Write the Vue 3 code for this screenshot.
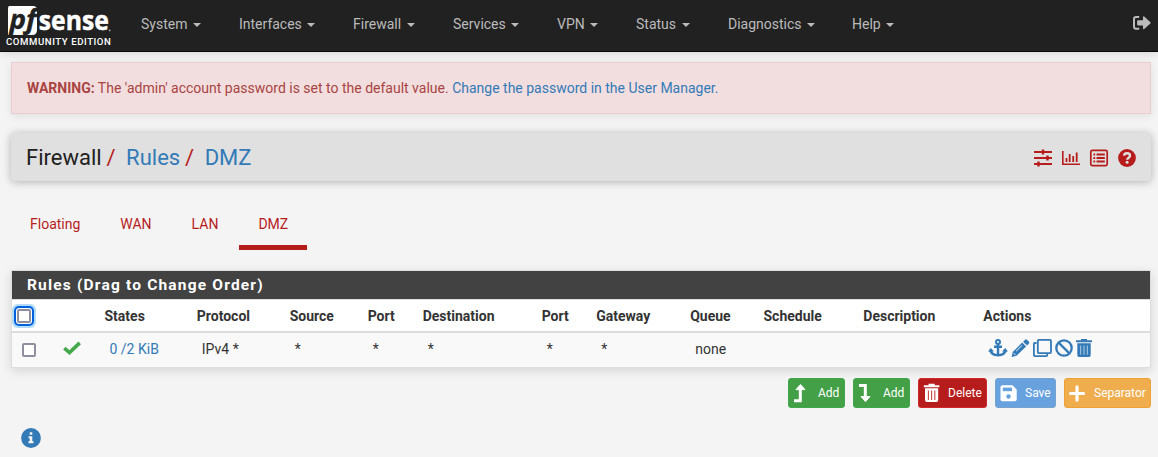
<script setup>
const menus = [
  { label: 'System', cls: 'm1' },
  { label: 'Interfaces', cls: 'm2' },
  { label: 'Firewall', cls: 'm3' },
  { label: 'Services', cls: 'm4' },
  { label: 'VPN', cls: 'm5' },
  { label: 'Status', cls: 'm6' },
  { label: 'Diagnostics', cls: 'm7' },
  { label: 'Help', cls: 'm8' },
]
const tabs = ['Floating', 'WAN', 'LAN', 'DMZ']
const columns = ['States', 'Protocol', 'Source', 'Port', 'Destination', 'Port', 'Gateway', 'Queue', 'Schedule', 'Description']
const values = ['IPv4 *', '*', '*', '*', '*', '*', 'none', '', '']
</script>

<template>
  <div class="page">
    <nav class="navbar">
      <div class="brand">
        <svg class="logo" width="106" height="31" viewBox="0 0 106 31">
          <path d="M3 1H27Q31 1 31 5V25Q31 30 26 30H2V4Q2 1 3 1Z" fill="#fff" />
          <text class="pf" x="3.4" y="24.4" textLength="27" lengthAdjust="spacingAndGlyphs">pf</text>
          <text class="sense" x="32.8" y="24.6" textLength="70" lengthAdjust="spacingAndGlyphs">sense</text>
          <circle cx="103.6" cy="25.4" r="0.9" fill="#aaa" />
        </svg>
        <span class="edition">COMMUNITY EDITION</span>
      </div>
      <ul class="menu">
        <li v-for="m in menus" :key="m.label" :class="m.cls">{{ m.label }}<i class="caret"></i></li>
      </ul>
      <svg class="logout" width="20" height="16" viewBox="0 0 20 16">
        <path d="M7.2 1.9H4Q2 1.9 2 3.9V11.7Q2 13.7 4 13.7H7.2" fill="none" stroke="#bbb" stroke-width="2" />
        <path d="M6 5.2H11V1.8Q11.3 1 12.2 1.5L18.4 7.2Q18.8 7.8 18.4 8.4L12.2 14Q11.3 14.6 11 13.6V10.4H6Q5.1 10.3 5.1 9.5V6Q5.2 5.3 6 5.2Z" fill="#bbb" />
      </svg>
    </nav>

    <div class="container">
      <div class="alert"><b>WARNING:</b> The 'admin' account password is set to the default value. <a>Change the password in the User Manager.</a></div>

      <header class="header">
        <div class="crumbs">
          <span class="c1">Firewall</span><span class="sl">/</span><a>Rules</a><span class="sl">/</span><a>DMZ</a>
        </div>
        <div class="tools">
          <svg width="18" height="18" viewBox="0 0 18 18">
            <path d="M0 3H18M0 9H18M0 15H18" stroke="#b71c1c" stroke-width="2" />
            <path d="M9 .6V5.4M13.5 6.6V11.4M4.5 12.6V17.4" stroke="#b71c1c" stroke-width="2.4" />
          </svg>
          <svg width="18" height="18" viewBox="0 0 18 18">
            <path d="M.8 2V15.2H18" fill="none" stroke="#b71c1c" stroke-width="1.6" />
            <path d="M4.5 9V13M7.7 5V13M11.2 7V13M14.7 3.5V13" stroke="#b71c1c" stroke-width="1.8" />
          </svg>
          <svg width="18" height="18" viewBox="0 0 18 18">
            <rect x=".8" y="1.4" width="16.4" height="15.2" rx="1.5" fill="none" stroke="#b71c1c" stroke-width="1.7" />
            <path d="M3.4 5.5H5.2M3.4 9H5.2M3.4 12.5H5.2M6.5 5.5H14.8M6.5 9H14.8M6.5 12.5H14.8" stroke="#b71c1c" stroke-width="1.8" />
          </svg>
          <svg width="18" height="18" viewBox="0 0 18 18">
            <circle cx="9" cy="9" r="8.9" fill="#b71c1c" />
            <path d="M6 6.6C6.4 3.5 12 3.4 12 6.7C12 8.8 9.3 8.6 9.2 10.8" fill="none" stroke="#e0e0e0" stroke-width="2.4" />
            <circle cx="9.1" cy="13.3" r="1.5" fill="#e0e0e0" />
          </svg>
        </div>
      </header>

      <ul class="tabs">
        <li v-for="t in tabs" :key="t" :class="{ active: t === 'DMZ' }">{{ t }}</li>
      </ul>

      <section class="panel">
        <h2>Rules (Drag to Change Order)</h2>
        <div class="row head">
          <div class="pick"><span class="box focus"></span></div>
          <div></div>
          <div v-for="(c, i) in columns" :key="i">{{ c }}</div>
          <div>Actions</div>
        </div>
        <div class="row data">
          <div class="pick"><span class="box"></span></div>
          <div class="pass">
            <svg width="18" height="14" viewBox="0 0 18 14">
              <path d="M1.3 7.2L6.5 11.6L16.7 1.9" fill="none" stroke="#43a94a" stroke-width="3.6" />
            </svg>
          </div>
          <div><a>0 /2 KiB</a></div>
          <div v-for="(v, i) in values" :key="i">{{ v }}</div>
          <div class="actions">
            <svg width="20" height="18" viewBox="0 0 20 18">
              <circle cx="10" cy="3" r="2" fill="none" stroke="#337ab7" stroke-width="2" />
              <path d="M10 5V16M6 7.7H14" stroke="#337ab7" stroke-width="2.4" />
              <path d="M2.5 11.5Q3.5 16 10 16.3Q16.5 16 17.5 11.5" fill="none" stroke="#337ab7" stroke-width="2.6" />
              <path d="M0 12.5L2.8 9L6 12.5ZM14 12.5L17.2 9L20 12.5Z" fill="#337ab7" />
            </svg>
            <svg width="19" height="18" viewBox="0 0 19 18">
              <path d="M12.1 2.7L14.1.7Q15 0 15.9.7L18 2.8Q18.7 3.7 18 4.6L16 6.6Z" fill="#337ab7" />
              <path d="M11.2 3.6L15.1 7.5L5.5 16.8L.6 18L1.7 13Z" fill="#337ab7" />
              <path d="M5 12.2L11 6.4M2.6 14.1L4.5 16" stroke="#f9f9f9" stroke-width=".9" />
            </svg>
            <svg width="19" height="18" viewBox="0 0 19 18">
              <rect x="4.8" y=".9" width="13.2" height="13.2" rx="1" fill="none" stroke="#337ab7" stroke-width="1.8" />
              <path d="M3.5 4H1.9Q.9 4 .9 5V16.1Q.9 17.1 1.9 17.1H13.2Q14.2 17.1 14.2 16.1V14.8" fill="none" stroke="#337ab7" stroke-width="1.8" />
            </svg>
            <svg width="18" height="18" viewBox="0 0 18 18">
              <circle cx="9" cy="9" r="7.7" fill="none" stroke="#337ab7" stroke-width="2.3" />
              <path d="M3.6 3.6L14.4 14.4" stroke="#337ab7" stroke-width="2.3" />
            </svg>
            <svg width="16" height="18" viewBox="0 0 16 18">
              <path d="M0 2.3H16M5 1H11" stroke="#337ab7" stroke-width="1.9" />
              <path d="M1.3 4.3H14.7V16Q14.7 18 13 18H3Q1.3 18 1.3 16Z" fill="#337ab7" />
              <path d="M4.7 6.5V15.7M8 6.5V15.7M11.3 6.5V15.7" stroke="#b4cde4" stroke-width="1" />
            </svg>
          </div>
        </div>
      </section>

      <div class="buttons">
        <button class="green b1">
          <svg width="18" height="20" viewBox="0 0 18 20"><path d="M1 17.8H7.3V5.5" fill="none" stroke="#fff" stroke-width="3" /><path d="M3 6.6L7.5 1.5L12 6.6Z" fill="#fff" stroke="#fff" stroke-linejoin="round" /></svg>Add
        </button>
        <button class="green b1">
          <svg width="18" height="20" viewBox="0 0 18 20"><path d="M1 2.4H7.3V14.5" fill="none" stroke="#fff" stroke-width="3" /><path d="M3 13.6L7.5 18.7L12 13.6Z" fill="#fff" stroke="#fff" stroke-linejoin="round" /></svg>Add
        </button>
        <button class="red b2">
          <svg width="18" height="20" viewBox="0 0 18 20"><path d="M.8 3.3H16.4M5.5 1.7H11.7" stroke="#fff" stroke-width="2" /><path d="M2 5.3H15.2V17Q15.2 19 13.4 19H3.8Q2 19 2 17Z" fill="#fff" /><path d="M5.4 7.5V17M8.6 7.5V17M11.8 7.5V17" stroke="#c44848" stroke-width="1.1" /></svg>Delete
        </button>
        <button class="blue b3">
          <svg width="18" height="20" viewBox="0 0 18 20"><path d="M2.5 2.3H12.5L16.7 6.4V16.5Q16.7 18.3 14.9 18.3H2.3Q.5 18.3 .5 16.5V4.3Q.5 2.3 2.5 2.3Z" fill="#fff" /><path d="M2.8 4.6H12V8.2H2.8Z" fill="#67a1de" /><circle cx="8.5" cy="13.5" r="2.2" fill="#67a1de" /></svg>Save
        </button>
        <button class="orange b4">
          <svg width="18" height="20" viewBox="0 0 18 20"><path d="M8 3.9V17.1M1.5 10.5H14.5" stroke="#fff" stroke-width="3.2" stroke-linecap="round" /></svg>Separator
        </button>
      </div>

      <svg class="info" width="20" height="20" viewBox="0 0 20 20">
        <circle cx="10" cy="10" r="9.9" fill="#337ab7" />
        <path d="M8.7 4.2H11.3V6.8H8.7ZM7.5 8.2H11.3V13.2H12.5V15.2H7.5V13.2H8.7V10.2H7.5Z" fill="#f4f4f4" />
      </svg>
    </div>
  </div>
</template>

<style>
body { background: #f4f4f4; overflow: hidden; }
</style>

<style scoped>
* { box-sizing: border-box; }
.page { height: 457px; background: #f4f4f4; font: 14px/20px Roboto, sans-serif; color: #333; }
ul { list-style: none; margin: 0; padding: 0; }
a { color: #337ab7; }
svg { display: block; flex: none; overflow: visible; }
.navbar { display: flex; height: 52px; background: #212121; border-bottom: 1px solid #080808; box-shadow: 0 2px 9px rgba(0, 0, 0, .12); }
.brand { width: 135px; padding: 5px 0 0 6px; color: #fff; }
.logo { display: block; }
.pf { font: italic 700 26px "Open Sans", sans-serif; fill: #212121; stroke: #212121; stroke-width: .3px; }
.sense { font: 700 27px "Open Sans", sans-serif; fill: #fff; stroke: #fff; stroke-width: .5px; }
.edition { display: block; font-size: 9.6px; line-height: 11px; font-weight: 500; letter-spacing: .57px; white-space: nowrap; }
.menu { display: flex; flex: 1; padding: 14px 0 0 6px; color: #bbb; }
.m1 { width: 98px; }
.m2 { width: 114px; }
.m3 { width: 100px; }
.m4 { width: 104px; }
.m5 { width: 79px; }
.m6 { width: 92px; }
.m7 { width: 124px; }
.caret { display: inline-block; margin-left: 5.5px; vertical-align: middle; border: 4px solid transparent; border-top-color: #bbb; border-bottom: 0; }
.logout { margin: 15px 6px 0 0; }
.container { padding: 10px 7px 0 11px; }
.alert { height: 52px; padding: 15px; background: #f2dede; border: 1px solid #ebccd1; color: #a94442; box-shadow: 0 2px 8px rgba(0, 0, 0, .09); }
.header { display: flex; justify-content: space-between; align-items: center; height: 48px; margin-top: 19px; padding: 0 15px; border-radius: 4px; background: #e0e0e0; box-shadow: 0 1px 8px rgba(0, 0, 0, .28); }
.crumbs { display: flex; padding-top: 2px; font-size: 22px; line-height: 24px; color: #212121; }
.sl { margin: 0 10.6px 0 4.8px; color: #b71c1c; }
.tools { display: flex; gap: 10px; padding-top: 2px; }
.tabs { display: flex; gap: 2px; margin-top: 18px; height: 51px; color: #b71c1c; }
.tabs li { padding: 15px 19px 0; border-bottom: 5px solid transparent; }
.tabs .active { border-bottom-color: #b71c1c; }
.panel { margin-top: 20px; border: 1px solid #ddd; background: #fff; box-shadow: 0 3px 10px rgba(0, 0, 0, .12); }
h2 { margin: 0; height: 28px; padding-left: 15px; background: #424242; color: #fff; font: 700 15.5px/28px Roboto, sans-serif; letter-spacing: 1.18px; }
.row { display: grid; grid-template-columns: 48.5px 39px 92.3px 92.9px 78px 55px 119px 54.5px 94px 73.3px 99.8px 120px 1fr; }
.row > div { padding-left: 5px; white-space: nowrap; }
.head { height: 34px; border-top: 1px solid #ddd; border-bottom: 2px solid #ddd; font-weight: 700; line-height: 32px; }
.data { height: 34px; background: #f9f9f9; line-height: 32px; }
.data > div { padding-left: 10px; }
.box { display: block; width: 14px; height: 14px; border: 2px solid #8f8f9d; border-radius: 2px; background: #fff; }
.head .pick { padding: 9px 0 0 5px; }
.data .pick { padding: 10px 0 0 10px; }
.head .focus { box-shadow: 0 0 0 1px #fff, 0 0 0 3px #0060df, 0 0 0 5px #b3dcf8; border-radius: 2px; }
.data .pass { padding: 8px 0 0 2px; }
.data .actions { display: flex; gap: 3px; padding: 6px 0 0 9.5px; }
.buttons { display: flex; justify-content: flex-end; gap: 8px; margin-top: 10px; }
button { display: flex; align-items: center; gap: 7px; height: 30px; padding: 0 0 0 4px; border: 1px solid; border-radius: 3px; color: #fff; font: 12px/18px Roboto, sans-serif; }
.b1 { width: 57px; }
.b2 { width: 69px; }
.b3 { width: 61px; }
.b4 { width: 87px; }
.green { background: #43a047; border-color: #3fa84a; }
.red { background: #b71c1c; border-color: #cf2929; }
.blue { background: #67a1de; border-color: #75a3cd; }
.orange { background: #f0ad4e; border-color: #eea236; }
.info { margin: 19.5px 0 0 10px; }
</style>
